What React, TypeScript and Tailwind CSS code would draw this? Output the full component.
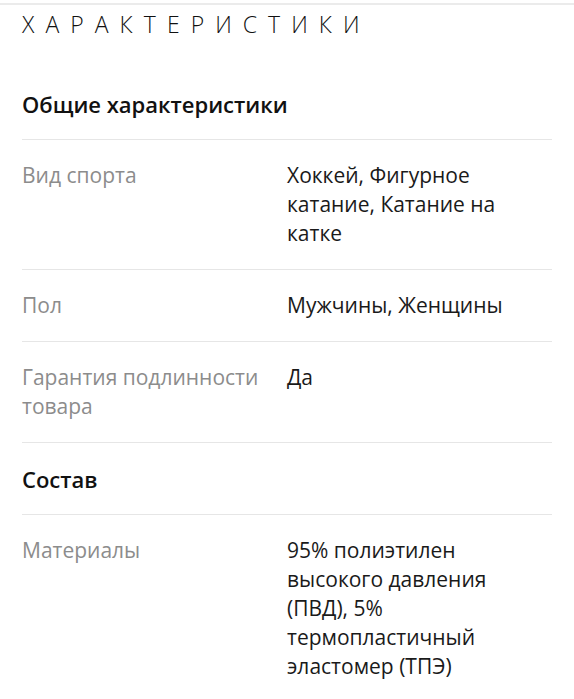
const font = { fontFamily: '"Open Sans", "Liberation Sans", sans-serif' };

type Row = { label: string; value: string };

const general: Row[] = [
  { label: "Вид спорта", value: "Хоккей, Фигурное катание, Катание на катке" },
  { label: "Пол", value: "Мужчины, Женщины" },
  { label: "Гарантия подлинности товара", value: "Да" },
];

const composition: Row[] = [
  {
    label: "Материалы",
    value: "95% полиэтилен высокого давления (ПВД), 5% термопластичный эластомер (ТПЭ)",
  },
];

function SpecRow({ row }: { row: Row }) {
  return (
    <div className="flex border-t border-[#e6e6e6] py-[21px] text-[21px] leading-[29px]">
      <div className="w-[265px] shrink-0 pr-1 text-[#8c8c8c]">{row.label}</div>
      <div className="w-[225px] text-[#1a1a1a]">{row.value}</div>
    </div>
  );
}

function Section({ title, rows }: { title: string; rows: Row[] }) {
  return (
    <div>
      <h3 className="pb-[20px] text-[22px] font-semibold leading-[30px] text-[#111]">{title}</h3>
      {rows.map((r) => (
        <SpecRow key={r.label} row={r} />
      ))}
    </div>
  );
}

export default function App() {
  return (
    <div className="min-h-[699px] bg-white" style={font}>
      <div className="h-[2px] bg-[#ebebeb] mt-[3px]" />
      <div className="px-[22px]">
        <h2 className="pt-[3px] text-[23px] font-light leading-[32px] tracking-[0.48em] text-[#111]">
          ХАРАКТЕРИСТИКИ
        </h2>
        <div className="mt-[49px]">
          <Section title="Общие характеристики" rows={general} />
        </div>
        <div className="border-t border-[#e6e6e6] pt-[21px]">
          <Section title="Состав" rows={composition} />
        </div>
      </div>
    </div>
  );
}
